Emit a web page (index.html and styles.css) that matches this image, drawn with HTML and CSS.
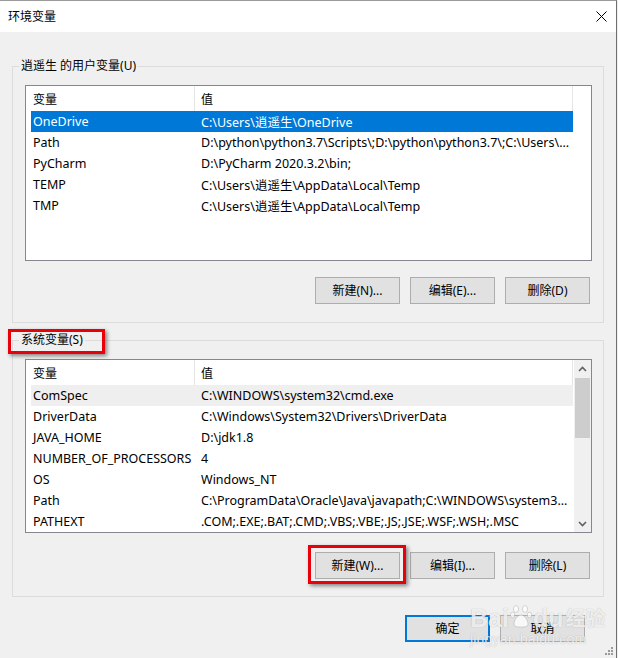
FILE: index.html
```html
<!DOCTYPE html>
<html lang="zh-CN">
<head>
<meta charset="utf-8">
<title>环境变量</title>
<link rel="stylesheet" href="styles.css">
</head>
<body>
<div class="window">
  <div class="titlebar">
    <span class="title">环境变量</span>
    <svg class="close" width="11" height="11" viewBox="0 0 11 11"><path d="M0.5 0.5L10.5 10.5M10.5 0.5L0.5 10.5" stroke="#000" stroke-width="1" fill="none"/></svg>
  </div>
  <div class="content">
    <fieldset class="group group-user">
      <legend>逍遥生 的用户变量(U)</legend>
      <div class="list list-user">
        <div class="list-main">
          <div class="list-head"><div class="hc hc1">变量</div><div class="hc hc2">值</div></div>
          <div class="row selected"><span class="c1">OneDrive</span><span class="c2">C:\Users\逍遥生\OneDrive</span></div>
          <div class="row"><span class="c1">Path</span><span class="c2">D:\python\python3.7\Scripts\;D:\python\python3.7\;C:\Users\...</span></div>
          <div class="row"><span class="c1">PyCharm</span><span class="c2">D:\PyCharm 2020.3.2\bin;</span></div>
          <div class="row"><span class="c1">TEMP</span><span class="c2">C:\Users\逍遥生\AppData\Local\Temp</span></div>
          <div class="row"><span class="c1">TMP</span><span class="c2">C:\Users\逍遥生\AppData\Local\Temp</span></div>
        </div>
      </div>
      <div class="btns">
        <button class="btn">新建(N)...</button>
        <button class="btn">编辑(E)...</button>
        <button class="btn">删除(D)</button>
      </div>
    </fieldset>

    <fieldset class="group group-sys">
      <legend>系统变量(S)</legend>
      <div class="list list-sys">
        <div class="list-main">
          <div class="list-head"><div class="hc hc1">变量</div><div class="hc hc2">值</div></div>
          <div class="row inactive"><span class="c1">ComSpec</span><span class="c2">C:\WINDOWS\system32\cmd.exe</span></div>
          <div class="row"><span class="c1">DriverData</span><span class="c2">C:\Windows\System32\Drivers\DriverData</span></div>
          <div class="row"><span class="c1">JAVA_HOME</span><span class="c2">D:\jdk1.8</span></div>
          <div class="row"><span class="c1">NUMBER_OF_PROCESSORS</span><span class="c2">4</span></div>
          <div class="row"><span class="c1">OS</span><span class="c2">Windows_NT</span></div>
          <div class="row"><span class="c1">Path</span><span class="c2">C:\ProgramData\Oracle\Java\javapath;C:\WINDOWS\system3...</span></div>
          <div class="row"><span class="c1">PATHEXT</span><span class="c2">.COM;.EXE;.BAT;.CMD;.VBS;.VBE;.JS;.JSE;.WSF;.WSH;.MSC</span></div>
        </div>
        <div class="scrollbar">
          <div class="sb-arrow"><svg width="9" height="6" viewBox="0 0 9 6"><path d="M1 5L4.5 1.5L8 5" stroke="#606060" stroke-width="1.6" fill="none"/></svg></div>
          <div class="sb-track"><div class="sb-thumb"></div></div>
          <div class="sb-arrow"><svg width="9" height="6" viewBox="0 0 9 6"><path d="M1 1L4.5 4.5L8 1" stroke="#606060" stroke-width="1.6" fill="none"/></svg></div>
        </div>
      </div>
      <div class="btns">
        <button class="btn">新建(W)...</button>
        <button class="btn">编辑(I)...</button>
        <button class="btn">删除(L)</button>
      </div>
    </fieldset>

    <div class="footer">
      <button class="btn btn-default">确定</button>
      <button class="btn">取消</button>
    </div>
  </div>

  <div class="mark mark-legend"></div>
  <div class="mark mark-button"></div>

  <div class="watermark">
    <div class="wm-top"><span class="wm-bai">Bai</span><svg class="wm-paw" width="22" height="24" viewBox="0 0 22 24"><g fill="rgba(255,255,255,0.75)" stroke="rgba(120,120,120,0.35)" stroke-width="0.8"><ellipse cx="6" cy="5" rx="2.6" ry="3.4"/><ellipse cx="15" cy="5" rx="2.6" ry="3.4"/><ellipse cx="2.5" cy="11" rx="2.2" ry="2.8"/><ellipse cx="19.5" cy="11" rx="2.2" ry="2.8"/><path d="M11 11c-4 0-7 6-7 9s3 3 7 3 7 0 7-3-3-9-7-9z"/></g></svg><span class="wm-du">du</span><span class="wm-jy">经验</span></div>
    <div class="wm-url">jingyan.baidu.com</div>
  </div>

  <svg class="grip" width="10" height="10" viewBox="0 0 10 10"><g fill="#9a9a9a"><rect x="8" y="2" width="2" height="2"/><rect x="5" y="5" width="2" height="2"/><rect x="8" y="5" width="2" height="2"/><rect x="2" y="8" width="2" height="2"/><rect x="5" y="8" width="2" height="2"/><rect x="8" y="8" width="2" height="2"/></g></svg>
</div>
</body>
</html>
```

FILE: styles.css
```css
* { box-sizing: border-box; }
html, body { margin: 0; padding: 0; }
body {
  width: 618px;
  height: 658px;
  overflow: hidden;
  background: #f0f0f0;
  font-family: "Noto Sans", "Noto Sans CJK SC", sans-serif;
  font-size: 12px;
  color: #000;
}
.window {
  position: relative;
  width: 617px;
  height: 658px;
  background: #f0f0f0;
  border-top: 1px solid #9a9a9a;
  border-right: 1px solid #6e6e6e;
}
.titlebar {
  height: 31px;
  background: #fff;
  display: flex;
  align-items: center;
  justify-content: space-between;
  padding: 0 9px 0 8px;
}
.title { line-height: 16px; }
.close { display: block; }

.content { padding-top: 26px; }

.group {
  margin: 0 12px;
  padding: 11px 11px 18px 12px;
  border: 1px solid #dcdcdc;
  min-width: 0;
}
.group-sys { margin-top: 9px; padding-bottom: 17px; }
.group legend {
  padding: 0 2px;
  margin-left: -6px;
  line-height: 16px;
  font-size: 12px;
}

.list {
  display: flex;
  background: #fff;
  border: 1px solid #828790;
  overflow: hidden;
}
.list-user { height: 176px; }
.list-sys { height: 174px; }
.list-main { flex: 1; min-width: 0; }

.list-head {
  display: flex;
  height: 25px;
}
.hc {
  display: flex;
  align-items: center;
  border-right: 1px solid #e5e5e5;
  white-space: nowrap;
}
.hc1 { width: 169px; padding-left: 7px; }
.hc2 { width: 378px; padding-left: 6px; }

.row {
  display: flex;
  align-items: center;
  height: 21px;
  margin-left: 5px;
  width: 542px;
  white-space: nowrap;
  font-size: 12.5px;
}
.row .c1 { width: 163px; padding-left: 2px; overflow: hidden; flex: none; }
.row .c2 { padding-left: 7px; overflow: hidden; flex: 1; min-width: 0; }
.row.selected { background: #0078d7; color: #fff; }
.row.inactive { background: #efefef; }

.scrollbar {
  width: 17px;
  flex: none;
  display: flex;
  flex-direction: column;
  background: #f0f0f0;
}
.sb-arrow {
  height: 17px;
  display: flex;
  align-items: center;
  justify-content: center;
}
.sb-arrow svg { display: block; }
.sb-track { flex: 1; padding: 1px 1px 0 1px; }
.sb-thumb { height: 60px; background: #cdcdcd; }

.btns {
  display: flex;
  justify-content: flex-end;
  gap: 10px;
  margin-top: 16px;
  padding-right: 2px;
}
.group-sys .btns { margin-top: 19px; }

.btn {
  width: 85px;
  height: 27px;
  background: #e1e1e1;
  border: 1px solid #adadad;
  border-radius: 0;
  padding: 0;
  font-family: inherit;
  font-size: 12px;
  color: #000;
  line-height: 16px;
}
.btn-default { border: 2px solid #0078d7; }

.footer {
  display: flex;
  justify-content: flex-end;
  gap: 10px;
  margin-top: 18px;
  padding-right: 31px;
}

.mark {
  position: absolute;
  border: 3px solid #e8000b;
  box-shadow: 2px 2px 4px rgba(0, 0, 0, 0.45);
}
.mark-legend { left: 8px; top: 328px; width: 97px; height: 25px; }
.mark-button { left: 308px; top: 544px; width: 98px; height: 39px; }

.watermark {
  position: absolute;
  left: 470px;
  top: 596px;
  color: rgba(255, 255, 255, 0.8);
  text-shadow: 0 0 1px rgba(90, 90, 90, 0.45);
  font-family: "Liberation Sans", "Noto Sans CJK SC", sans-serif;
  pointer-events: none;
}
.wm-top { display: flex; align-items: flex-end; height: 34px; }
.wm-bai, .wm-du { font-size: 25px; font-weight: bold; line-height: 26px; }
.wm-paw { margin: 0 1px 3px 1px; }
.wm-jy { font-size: 20px; line-height: 24px; margin-left: 2px; font-weight: bold; }
.wm-url { font-size: 14px; line-height: 16px; margin-top: 0; letter-spacing: 0.2px; }

.grip { position: absolute; right: 3px; bottom: 3px; }
```
